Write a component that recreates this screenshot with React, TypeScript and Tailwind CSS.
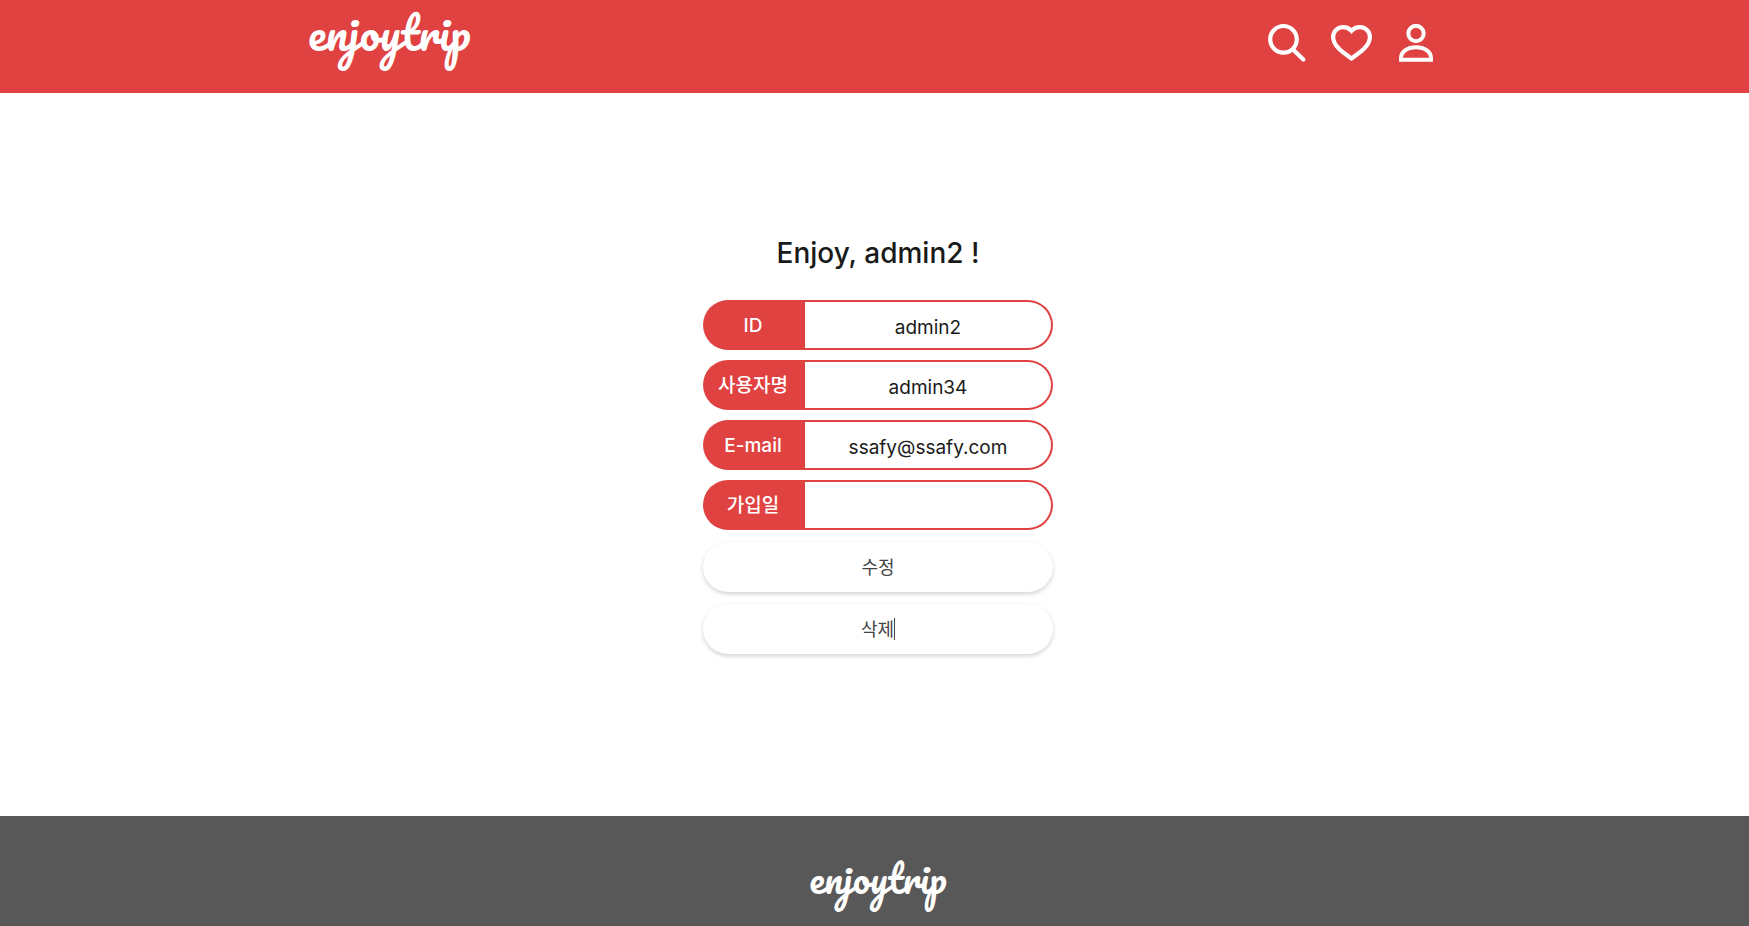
const FONT = 'font-["Inter","Noto_Sans_CJK_KR",sans-serif]';
const WORDMARK = 'font-["Pacifico","Lato",cursive] font-normal text-white';

function SearchIcon() {
  return (
    <svg width="40" height="40" viewBox="0 0 40 40" fill="none" stroke="currentColor" strokeWidth="4.2" aria-hidden="true">
      <circle cx="17.5" cy="16.3" r="13.3" />
      <path d="M27 26.5 37.3 36.6" strokeLinecap="round" />
    </svg>
  );
}

function HeartIcon() {
  return (
    <svg width="44" height="40" viewBox="0 0 44 40" fill="none" stroke="currentColor" strokeWidth="4.2" aria-hidden="true">
      <path d="M21.5 7.8C19 5 16 4.1 13.2 4.1C7.5 4.1 3.1 8.5 3.1 14C3.1 22.500 11.500 28.500 21.500 35.500C31.500 28.500 39.900 22.500 39.900 14C39.900 8.500 35.500 4.100 29.800 4.100C27 4.100 24 5 21.500 7.800Z" />
    </svg>
  );
}

function PersonIcon() {
  return (
    <svg width="36" height="40" viewBox="0 0 36 40" fill="none" stroke="currentColor" strokeWidth="4" aria-hidden="true">
      <circle cx="18" cy="10.5" r="7.7" />
      <path d="M3 36.8V35C3 28.8 9 24.3 18 24.3S33 28.8 33 35V36.8Z" />
    </svg>
  );
}

const fields = [
  { id: 'user-id', label: 'ID', value: 'admin2' },
  { id: 'user-name', label: '사용자명', value: 'admin34' },
  { id: 'user-email', label: 'E-mail', value: 'ssafy@ssafy.com' },
  { id: 'join-date', label: '가입일', value: '' },
];

export default function App() {
  return (
    <div className={`${FONT} flex min-h-screen flex-col bg-white text-[#1a1a1a]`}>
      <header className="h-[93px] bg-[#e04141] pl-[7px] text-white">
        <div className="mx-auto flex max-w-[1140px] items-start justify-between">
          <a href="#home" className={`${WORDMARK} pt-1 text-[45px] leading-[56px]`}>
            enjoytrip
          </a>
          <nav className="flex items-center gap-6 pt-[23px] pr-[14px]">
            <button type="button" aria-label="검색"><SearchIcon /></button>
            <button type="button" aria-label="찜 목록"><HeartIcon /></button>
            <button type="button" aria-label="내 정보"><PersonIcon /></button>
          </nav>
        </div>
      </header>

      <main className="flex flex-1 flex-col items-center pt-[136px] pb-[162px] pl-[7px]">
        <h1 className="text-[28px] leading-[48px] font-medium">Enjoy, admin2 !</h1>
        <form className="mt-[23px] flex w-[350px] flex-col gap-3">
          <div className="flex flex-col gap-[10px]">
            {fields.map((f) => (
              <div key={f.id} className="flex h-[50px]">
                <label htmlFor={f.id} className="flex w-[102px] shrink-0 items-center justify-center rounded-l-full bg-[#e04141] pt-[2px] pr-[2px] text-[19px] font-medium text-white">
                  {f.label}
                </label>
                <input id={f.id} readOnly defaultValue={f.value} className="w-full min-w-0 rounded-r-full border-2 border-l-0 border-[#e04141] pt-[6px] text-center text-[19px] outline-none" />
              </div>
            ))}
          </div>
          <button type="button" className="h-[50px] rounded-full bg-white text-[18px] text-[#444] shadow-[0_2px_4px_rgba(0,0,0,0.18)]">
            수정
          </button>
          <button type="button" className="flex h-[50px] items-center justify-center rounded-full bg-white text-[18px] text-[#444] shadow-[0_2px_4px_rgba(0,0,0,0.18)]">
            삭제
            <span className="h-[22px] w-px bg-[#444]" />
          </button>
        </form>
      </main>

      <footer className="flex h-[110px] items-start justify-center bg-[#585858] pt-[38px] pl-[7px]">
        <a href="#home" className={`${WORDMARK} text-[38px] leading-[48px]`}>
          enjoytrip
        </a>
      </footer>
    </div>
  );
}
